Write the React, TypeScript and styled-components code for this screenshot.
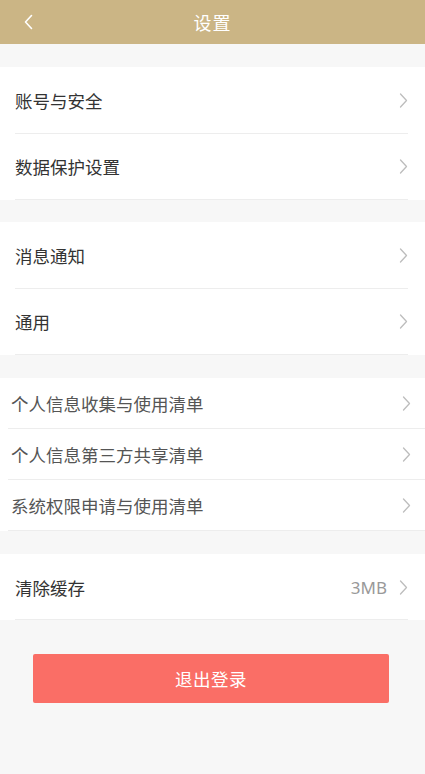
import React from 'react';
import styled, { createGlobalStyle } from 'styled-components';

const GlobalStyle = createGlobalStyle`
  html, body {
    margin: 0;
    padding: 0;
    background: #f7f7f7;
    font-family: "Noto Sans CJK SC", "Noto Sans", sans-serif;
  }
`;

const Page = styled.div`
  width: 425px;
  min-height: 774px;
  background: #f7f7f7;
  display: flex;
  flex-direction: column;
`;

const Header = styled.header`
  height: 44px;
  background: #cbb585;
  display: flex;
  align-items: center;
  justify-content: center;
  position: relative;
`;

const BackButton = styled.button`
  position: absolute;
  left: 18px;
  top: 11px;
  width: 20px;
  height: 22px;
  padding: 0;
  border: 0;
  background: transparent;
  display: flex;
  align-items: center;
  justify-content: center;
`;

const Title = styled.h1`
  margin: 0;
  color: #fff;
  font-size: 18px;
  font-weight: 400;
  letter-spacing: 1px;
`;

const Group = styled.section<{ $top: number }>`
  margin-top: ${p => p.$top}px;
  background: #fff;
`;

const Row = styled.div<{ $h: number; $inset: boolean }>`
  height: ${p => p.$h}px;
  box-sizing: border-box;
  display: flex;
  align-items: center;
  padding: ${p => (p.$inset ? '0 17px 0 15px' : '0 14px 0 11px')};
  position: relative;

  &::after {
    content: '';
    position: absolute;
    left: ${p => (p.$inset ? '15px' : '8px')};
    right: ${p => (p.$inset ? '17px' : '0')};
    bottom: 0;
    height: 1px;
    background: #ededed;
  }
`;

const Label = styled.span<{ $light: boolean }>`
  flex: 1;
  font-size: 17.5px;
  color: ${p => (p.$light ? '#555' : '#333')};
`;

const Value = styled.span`
  font-family: "Noto Sans", sans-serif;
  font-size: 17px;
  color: #999;
  margin-right: 12px;
`;

const LogoutWrap = styled.div`
  padding: 34px 36px 0 33px;
`;

const LogoutButton = styled.button`
  width: 100%;
  height: 49px;
  border: 0;
  border-radius: 2px;
  background: #fa6e66;
  color: #fff;
  font-family: "Noto Sans CJK SC", sans-serif;
  font-size: 17.5px;
  letter-spacing: 0.5px;
`;

const Chevron = ({ color = '#bdbdbd' }: { color?: string }) => (
  <svg width="9" height="15" viewBox="0 0 9 15" fill="none">
    <path d="M1.5 1 L7.5 7.5 L1.5 14" stroke={color} strokeWidth="1.3" strokeLinecap="round" strokeLinejoin="round" />
  </svg>
);

type Item = { label: string; value?: string };

const groups: { top: number; h: number; inset: boolean; items: Item[] }[] = [
  { top: 23, h: 66.5, inset: true, items: [{ label: '账号与安全' }, { label: '数据保护设置' }] },
  { top: 22, h: 66.5, inset: true, items: [{ label: '消息通知' }, { label: '通用' }] },
  {
    top: 23,
    h: 51,
    inset: false,
    items: [
      { label: '个人信息收集与使用清单' },
      { label: '个人信息第三方共享清单' },
      { label: '系统权限申请与使用清单' },
    ],
  },
  { top: 23, h: 66, inset: true, items: [{ label: '清除缓存', value: '3MB' }] },
];

export default function App() {
  return (
    <Page>
      <GlobalStyle />
      <Header>
        <BackButton aria-label="返回">
          <svg width="11" height="16" viewBox="0 0 11 16" fill="none">
            <path d="M8.5 1.5 L2.5 8 L8.5 14.5" stroke="#fff" strokeWidth="1.6" strokeLinecap="round" strokeLinejoin="round" />
          </svg>
        </BackButton>
        <Title>设置</Title>
      </Header>
      {groups.map((g, gi) => (
        <Group key={gi} $top={g.top}>
          {g.items.map(it => (
            <Row key={it.label} $h={g.h} $inset={g.inset}>
              <Label $light={!g.inset}>{it.label}</Label>
              {it.value && <Value>{it.value}</Value>}
              <Chevron />
            </Row>
          ))}
        </Group>
      ))}
      <LogoutWrap>
        <LogoutButton>退出登录</LogoutButton>
      </LogoutWrap>
    </Page>
  );
}
